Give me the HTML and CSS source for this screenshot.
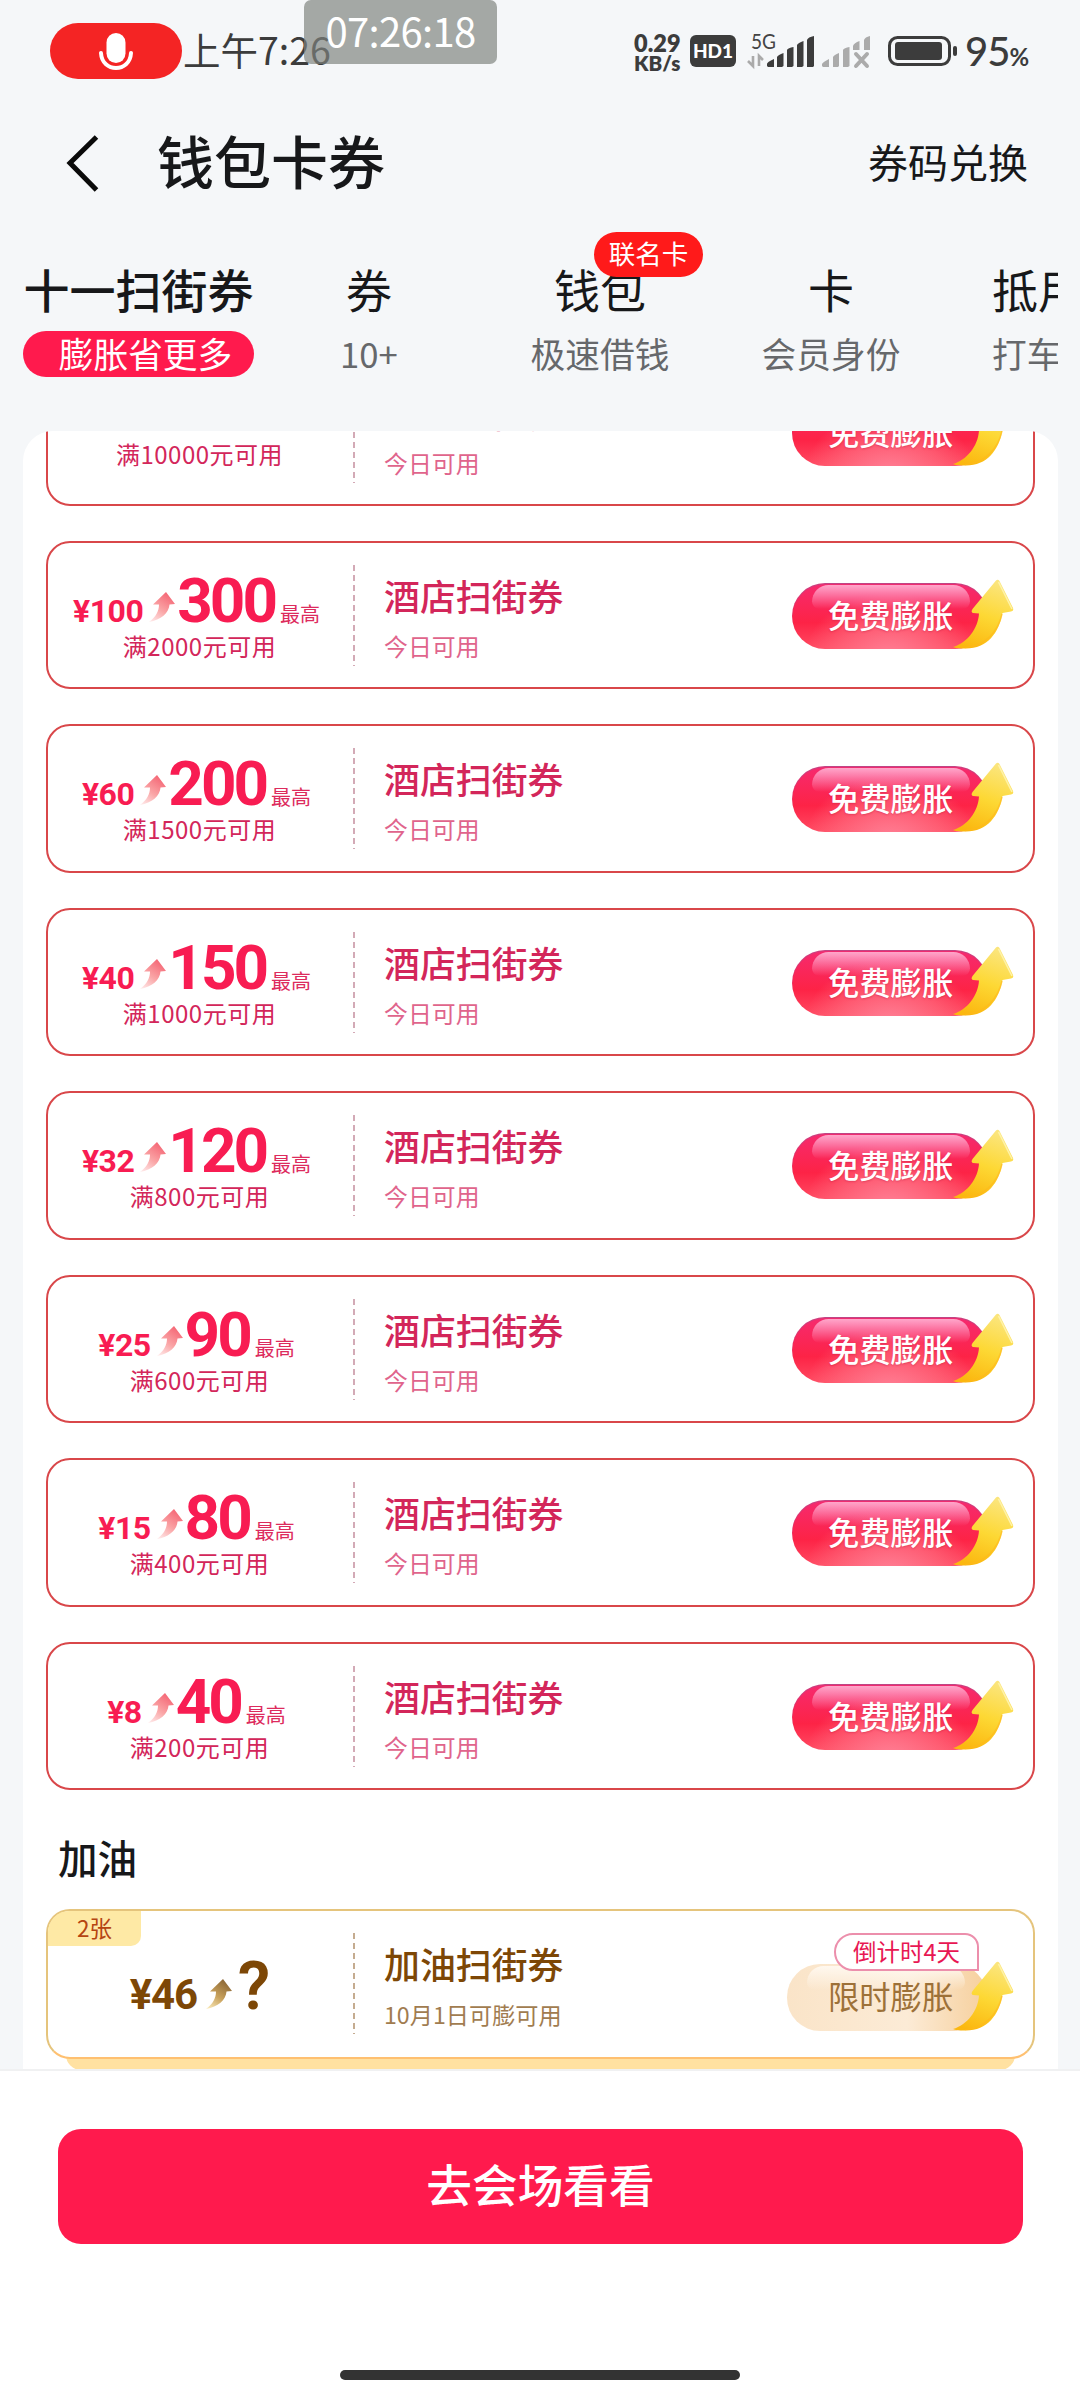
FILE: index.html
```
<!DOCTYPE html>
<html lang="zh-CN">
<head>
<meta charset="utf-8">
<title>钱包卡券</title>
<link rel="stylesheet" href="styles.css">
</head>
<body>
<svg class="defs" width="0" height="0" aria-hidden="true">
  <defs>
    <linearGradient id="rise" x1="0" y1="1" x2=".6" y2="0"><stop offset="0" stop-color="#fff0f0"/><stop offset=".5" stop-color="#faa5a6"/><stop offset="1" stop-color="#f56a78"/></linearGradient>
    <linearGradient id="riseGold" x1="0" y1="1" x2=".6" y2="0"><stop offset="0" stop-color="#fff1c4"/><stop offset=".5" stop-color="#c9a25c"/><stop offset="1" stop-color="#8f6a38"/></linearGradient>
    <linearGradient id="gold" x1=".6" y1="0" x2=".3" y2="1"><stop offset="0" stop-color="#fbe57c"/><stop offset=".5" stop-color="#fdd834"/><stop offset="1" stop-color="#fbb70f"/></linearGradient>
  </defs>
  <symbol id="up" viewBox="0 0 26 30"><path d="M17 0 26 12 20.500 12.500C20 21 12 28 0 30 7 25 10 19 10 12.500L4 12.500Z"/></symbol>
  <symbol id="boost" viewBox="0 0 64 70"><path d="M45 1.500Q47 0 48.500 2L62 29Q63 32 60 32.500L51.500 34C48 54 36 70 14 69.500 9 69.500 4 69 2 68 16 64 27 50 28 34.500L22 34Q19.500 33 21.500 30Z" fill="url(#gold)"/><path d="M47.500 3 61 30" stroke="#fff3a8" stroke-width="1.500" fill="none"/><path d="M51 35C47 53 34 67 14 68.500" stroke="#ffb81c" stroke-width="1.500" fill="none" opacity=".6"/></symbol>
</svg>

<header class="status">
  <div class="mic"><svg width="34" height="38" viewBox="0 0 34 38"><rect x="7.500" y="0" width="19" height="30" rx="9.500" fill="#fff"/><path d="M2 20C3 40 31 40 32 20" fill="none" stroke="#fff" stroke-width="4" stroke-linecap="round"/></svg></div>
  <div class="clock">上午7:26</div>
  <div class="speed"><span>0.29</span><span>KB/s</span></div>
  <div class="hd">HD1</div>
  <svg class="signal" width="126" height="38" viewBox="747 32 126 38">
    <text x="751" y="49" font-size="21" textLength="25" lengthAdjust="spacingAndGlyphs" fill="#444">5G</text>
    <path d="M753 56V66L748 61M759 66V56L763 60" stroke="#aaa" stroke-width="2.600" fill="none"/>
    <path d="M767 66V64Q767 62 774 59V67H768ZM777 67V57Q778 55 783.500 53V66L782 67ZM787 67V50Q788 48 793.500 47V66L792 67ZM797 67V45Q798 43 803.500 41V66L802 67ZM807 67V40Q808 37 814 36V66L813 67Z" fill="#3c3c3c"/>
    <path d="M822 66V64Q823 62 829 59V67H823ZM833 67V57Q834 55 839 53V66L838 67ZM843 67V50Q844 48 849.500 47V66L848 67ZM853 50V46Q854 43 859.500 41V50ZM864 50V40Q865 37 870 36V50Z" fill="#ababab"/>
    <path d="M856 54 867 66M867 54 856 66" stroke="#ababab" stroke-width="4" stroke-linecap="round"/>
  </svg>
  <svg class="battery" width="70" height="30" viewBox="0 0 70 30"><rect x="1.500" y="1.500" width="60" height="27" rx="8" fill="none" stroke="#3c3c3c" stroke-width="3"/><rect x="7" y="6" width="47" height="18" rx="3" fill="#3c3c3c"/><rect x="65" y="10" width="4" height="10" rx="2" fill="#3c3c3c"/></svg>
  <div class="percent">95<small>%</small></div>
  <div class="stamp">07:26:18</div>
</header>

<nav class="titlebar">
  <svg width="34" height="58" viewBox="0 0 34 58"><path d="M31.500 3 5 29 31.500 56" fill="none" stroke="#0a0a0a" stroke-width="5"/></svg>
  <h1>钱包卡券</h1>
  <a>券码兑换</a>
</nav>

<div class="tabs">
  <div class="tab active"><b>十一扫街券</b><span>膨胀省更多</span></div>
  <div class="tab"><b>券</b><span>10+</span></div>
  <div class="tab"><b>钱包</b><span>极速借钱</span><i class="badge">联名卡</i></div>
  <div class="tab"><b>卡</b><span>会员身份</span></div>
  <div class="tab last"><b>抵用</b><span>打车</span></div>
</div>

<main class="panel">
  <div class="list">
    <article class="card tall">
      <div class="value"><p class="sum"><span class="from">¥500</span><svg class="up"><use href="#up"/></svg><strong>1000</strong><em>最高</em></p><p class="rule">满10000元可用</p></div>
      <div class="info"><h2>酒店扫街券</h2><p>今日可用</p></div>
      <div class="go"><span>免费膨胀</span><svg class="boost"><use href="#boost"/></svg></div>
    </article>
    <article class="card">
      <div class="value"><p class="sum"><span class="from">¥100</span><svg class="up"><use href="#up"/></svg><strong>300</strong><em>最高</em></p><p class="rule">满2000元可用</p></div>
      <div class="info"><h2>酒店扫街券</h2><p>今日可用</p></div>
      <div class="go"><span>免费膨胀</span><svg class="boost"><use href="#boost"/></svg></div>
    </article>
    <article class="card">
      <div class="value"><p class="sum"><span class="from">¥60</span><svg class="up"><use href="#up"/></svg><strong>200</strong><em>最高</em></p><p class="rule">满1500元可用</p></div>
      <div class="info"><h2>酒店扫街券</h2><p>今日可用</p></div>
      <div class="go"><span>免费膨胀</span><svg class="boost"><use href="#boost"/></svg></div>
    </article>
    <article class="card">
      <div class="value"><p class="sum"><span class="from">¥40</span><svg class="up"><use href="#up"/></svg><strong>150</strong><em>最高</em></p><p class="rule">满1000元可用</p></div>
      <div class="info"><h2>酒店扫街券</h2><p>今日可用</p></div>
      <div class="go"><span>免费膨胀</span><svg class="boost"><use href="#boost"/></svg></div>
    </article>
    <article class="card">
      <div class="value"><p class="sum"><span class="from">¥32</span><svg class="up"><use href="#up"/></svg><strong>120</strong><em>最高</em></p><p class="rule">满800元可用</p></div>
      <div class="info"><h2>酒店扫街券</h2><p>今日可用</p></div>
      <div class="go"><span>免费膨胀</span><svg class="boost"><use href="#boost"/></svg></div>
    </article>
    <article class="card">
      <div class="value"><p class="sum"><span class="from">¥25</span><svg class="up"><use href="#up"/></svg><strong>90</strong><em>最高</em></p><p class="rule">满600元可用</p></div>
      <div class="info"><h2>酒店扫街券</h2><p>今日可用</p></div>
      <div class="go"><span>免费膨胀</span><svg class="boost"><use href="#boost"/></svg></div>
    </article>
    <article class="card">
      <div class="value"><p class="sum"><span class="from">¥15</span><svg class="up"><use href="#up"/></svg><strong>80</strong><em>最高</em></p><p class="rule">满400元可用</p></div>
      <div class="info"><h2>酒店扫街券</h2><p>今日可用</p></div>
      <div class="go"><span>免费膨胀</span><svg class="boost"><use href="#boost"/></svg></div>
    </article>
    <article class="card">
      <div class="value"><p class="sum"><span class="from">¥8</span><svg class="up"><use href="#up"/></svg><strong>40</strong><em>最高</em></p><p class="rule">满200元可用</p></div>
      <div class="info"><h2>酒店扫街券</h2><p>今日可用</p></div>
      <div class="go"><span>免费膨胀</span><svg class="boost"><use href="#boost"/></svg></div>
    </article>
  </div>
  <h3>加油</h3>
  <article class="card fuel">
    <i class="count">2张</i>
    <div class="value"><p class="sum"><span class="from">¥46</span><svg class="up"><use href="#up"/></svg><strong>?</strong></p></div>
    <div class="info"><h2>加油扫街券</h2><p>10月1日可膨可用</p></div>
    <div class="go"><span>限时膨胀</span><svg class="boost"><use href="#boost"/></svg><i class="countdown">倒计时4天</i></div>
  </article>
  <div class="stack"></div>
</main>

<footer class="footer">
  <button>去会场看看</button>
  <div class="home"></div>
</footer>
</body>
</html>
```
FILE: styles.css
```
* { box-sizing: border-box; margin: 0; padding: 0; }
body {
  width: 1080px; height: 2400px; overflow: hidden;
  display: flex; flex-direction: column;
  background: #f5f7f9; color: #17181a;
  font-family: "Noto Sans CJK SC", sans-serif;
}
h1, h2, h3, b { font-weight: 500; }
em, i { font-style: normal; }
.defs { position: absolute; }

/* status bar */
.status { position: relative; flex: none; height: 102px; padding: 23px 51px 0 50px; display: flex; color: #3c3c3c; }
.mic { width: 132px; height: 56px; border-radius: 28px; background: #f42424; display: flex; justify-content: center; padding-top: 10px; }
.clock { width: 150px; margin-left: 1px; font-size: 37.500px; line-height: 52px; letter-spacing: 0; white-space: nowrap; }
.speed { width: 48px; margin: 10px 0 0 301px; font: 800 20.500px/20px Lato, sans-serif; display: flex; flex-direction: column; }
.speed span:first-child { font-size: 23.500px; }
.hd { width: 46px; height: 32px; margin: 12px 0 0 8px; border-radius: 6px; background: #3c3c3c; color: #fff; font: 900 19px/32px Lato, sans-serif; text-align: center; }
.signal { margin: 9px 0 0 11px; font-family: Lato, sans-serif; }
.battery { margin: 13px 0 0 15px; flex: none; }
.percent { margin: 5px 0 0 7px; font: 500 40px/46px Lato, sans-serif; letter-spacing: -1px; white-space: nowrap; }
.percent small { font-size: 24px; font-weight: 700; }
.stamp { position: absolute; left: 304px; top: 0; width: 193px; height: 64px; border-radius: 7px; background: rgba(126, 129, 126, .68); color: #fff; font-size: 40px; line-height: 60px; letter-spacing: -.7px; text-align: center; }

/* title */
.titlebar { height: 122px; flex: none; padding: 0 52px 0 65px; display: flex; align-items: center; }
.titlebar h1 { margin: -9px 0 0 58px; font-size: 57px; line-height: 80px; }
.titlebar a { margin: -5px 0 0 auto; font-size: 40px; line-height: 60px; }

/* tabs */
.tabs { height: 207px; flex: none; margin: 0 22px 0 23px; overflow: hidden; display: flex; }
.tab { position: relative; flex: none; width: 231px; padding-top: 35px; display: flex; flex-direction: column; align-items: center; white-space: nowrap; }
.tab b { margin-left: -1px; font-size: 46px; line-height: 58px; font-weight: 400; }
.tab.active b { margin-left: 0; font-weight: 500; }
.tab span { margin: 14px 0 0 -1px; font-size: 34.700px; line-height: 45px; color: #66686b; }
.tab.active span { margin: 14px 0 0; width: 231px; height: 46px; padding-left: 14px; border-radius: 23px; background: #ff1a4d; color: #fff; line-height: 45px; text-align: center; }
.tab.last { align-items: flex-start; width: 140px; padding-left: 46px; }
.badge { position: absolute; left: 109px; top: 8px; width: 109px; height: 45px; border-radius: 23px; background: #ff1a1a; color: #fff; font-size: 26.500px; line-height: 42px; text-align: center; }

/* coupons */
.panel { height: 1638px; flex: none; margin: 0 22px 0 23px; padding: 0 23px; border-radius: 30px 30px 0 0; background: #fff; overflow: hidden; }
.list { margin-top: -73.500px; display: flex; flex-direction: column; gap: 34.950px; }
.card { position: relative; height: 148.500px; flex: none; display: flex; border: 2px solid #d9474a; border-radius: 24px; color: #d3265a; }
.card > div { flex: none; }
.value { width: 305px; display: flex; flex-direction: column; align-items: center; padding-top: 24px; }
.sum { height: 64px; display: flex; align-items: baseline; margin-left: -8px; color: #f81c52; font-family: Roboto, sans-serif; font-weight: 700; white-space: nowrap; }
.from { font-size: 32px; letter-spacing: -.5px; }
.sum strong { font-size: 62px; line-height: 68px; font-weight: 700; letter-spacing: -3px; }
.up { width: 26px; height: 30px; margin: 0 2px 0 6px; fill: url(#rise); }
.sum em { margin-left: 5px; font: 400 20px/24px "Noto Sans CJK SC", sans-serif; color: #dd2b5d; }
.rule { margin-left: -2px; font-size: 24px; line-height: 30px; letter-spacing: .5px; }
.info { width: 403px; padding: 29px 0 0 31px; background: repeating-linear-gradient(#d3aab6 0 6px, transparent 6px 10px) 0 22px / 2px 101px no-repeat; }
.info h2 { font-size: 35.900px; line-height: 46px; }
.info p { margin-top: 12px; font-size: 23.900px; line-height: 32px; color: #e0648c; }
.go { position: relative; width: 196px; height: 66px; margin: 40px 0 0 36px; padding-left: 36px; border-radius: 33px; color: #fff; font-size: 31.300px; font-weight: 500; line-height: 63px; white-space: nowrap;
  background: radial-gradient(ellipse at 50% 115%, #ff8096 0, rgba(255, 110, 130, .6) 38%, transparent 62%), linear-gradient(#f62a70, #fd2346 60%, #ff4a61);
  box-shadow: inset 0 1px 1px #b84a88; }
.go::before { content: ""; position: absolute; left: 20px; top: 2px; width: 158px; height: 24px; border-radius: 18px 18px 8px 8px; background: linear-gradient(#ffa6ca, rgba(255, 120, 160, 0)); }
.go span { position: relative; text-shadow: 0 1px 2px rgba(190, 20, 60, .4); }
.boost { position: absolute; left: 159px; top: -4px; width: 64px; height: 70px; }
.tall .sum { height: 54px; }
.tall .from { font-size: 27px; }
.tall .sum strong { font-size: 48px; line-height: 50px; letter-spacing: -1px; }
.tall .value { padding-top: 25px; }

.panel h3 { margin: 37px 0 0 12px; font-size: 39.500px; line-height: 60px; }
.fuel { height: 150px; margin-top: 22px; border-color: #e5c47c; border-bottom-color: #ffc070; color: #7d4706; background: #fff; z-index: 1; }
.count { position: absolute; left: 0; top: 0; width: 93px; height: 35px; border-radius: 21px 0 10px 0; background: #fee9a5; color: #b54512; font-size: 22.500px; line-height: 33px; text-align: center; }
.fuel .sum { height: auto; margin-left: -1px; color: #7d4706; }
.fuel .value { padding-top: 42px; }
.fuel .from { font-size: 42px; letter-spacing: -1.200px; }
.fuel .up { margin: 0 6px 0 9px; fill: url(#riseGold); }
.fuel .sum strong { font-size: 66px; font-weight: 600; letter-spacing: 0; }
.fuel .info { background-image: repeating-linear-gradient(#c5ac90 0 6px, transparent 6px 10px); }
.fuel .info p { color: #a17c50; font-size: 23.200px; margin-top: 12px; }
.fuel .go { width: 200px; margin: 53px 0 0 31px; padding-left: 41px; height: 67px; color: #9d7138; font-weight: 400; background: linear-gradient(90deg, #fae4c8, #fcebd6 60%, #f6cf9c); box-shadow: none; }
.fuel .go::before { background: linear-gradient(#fff8ef, rgba(255, 248, 239, 0)); }
.fuel .go span { text-shadow: none; }
.fuel .boost { left: 164px; top: -3px; }
.countdown { position: absolute; left: 47px; top: -31px; width: 145px; height: 38px; border: 2px solid #ec8fac; border-radius: 19px 14px 0 19px; background: #fff; color: #e81753; font-size: 23.500px; line-height: 32px; text-align: center; }
.stack { height: 30px; margin: -19px 20px 0; border-radius: 24px; background: #ffe1a1; }

/* footer */
.footer { height: 331px; flex: none; padding: 58px 57px 0 58px; border-top: 2px solid #f0f1f2; background: #fff; display: flex; flex-direction: column; align-items: center; }
.footer button { width: 100%; height: 115px; padding-bottom: 8px; border: 0; border-radius: 23px; background: #ff1a4d; color: #fff; font: 500 45.700px/100px "Noto Sans CJK SC", sans-serif; }
.home { width: 400px; height: 10px; margin: 126px 2px 0 0; border-radius: 5px; background: #333; }
```
